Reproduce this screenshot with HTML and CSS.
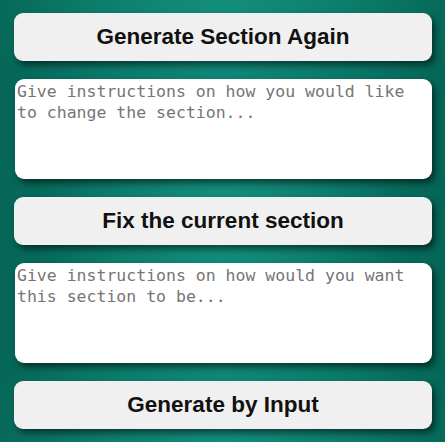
FILE: index.html
```html
<!DOCTYPE html>
<html lang="en">
<head>
<meta charset="utf-8">
<title>Section tools</title>
<link rel="stylesheet" href="styles.css">
</head>
<body>
<main class="panel">
  <button class="action">Generate Section Again</button>
  <textarea class="prompt" placeholder="Give instructions on how you would like to change the section..."></textarea>
  <button class="action">Fix the current section</button>
  <textarea class="prompt" placeholder="Give instructions on how would you want this section to be..."></textarea>
  <button class="action">Generate by Input</button>
</main>
</body>
</html>
```

FILE: styles.css
```css
html, body {
  margin: 0;
  height: 100%;
}
body {
  background:
    radial-gradient(ellipse 60% 40% at 50% 50%, rgba(30,160,140,0.55), rgba(30,160,140,0) 70%),
    radial-gradient(ellipse 80% 30% at 50% 5%, rgba(30,160,140,0.5), rgba(30,160,140,0) 70%),
    radial-gradient(ellipse 80% 30% at 50% 95%, rgba(30,160,140,0.5), rgba(30,160,140,0) 70%),
    linear-gradient(90deg, #056657 0%, #0b8070 50%, #056657 100%);
  overflow: hidden;
}
.panel {
  display: flex;
  flex-direction: column;
  gap: 18px;
  padding: 13px 13px 0 14px;
}
.action {
  height: 48px;
  border: none;
  border-radius: 9px;
  background: #f0f0f0;
  color: #111;
  font-family: "Liberation Sans", Arial, sans-serif;
  font-weight: bold;
  font-size: 22.5px;
  box-shadow: 3px 4px 7px rgba(0,0,0,0.55);
  padding: 0;
}
.prompt {
  height: 100px;
  box-sizing: border-box;
  margin: 0 0 0 1px;
  border: none;
  border-radius: 9px;
  background: #fff;
  padding: 2px 2px;
  resize: none;
  font-family: "DejaVu Sans Mono", monospace;
  font-size: 16.5px;
  line-height: 21px;
  box-shadow: 3px 4px 7px rgba(0,0,0,0.55);
}
.prompt::placeholder {
  color: #757575;
  opacity: 1;
}
```
